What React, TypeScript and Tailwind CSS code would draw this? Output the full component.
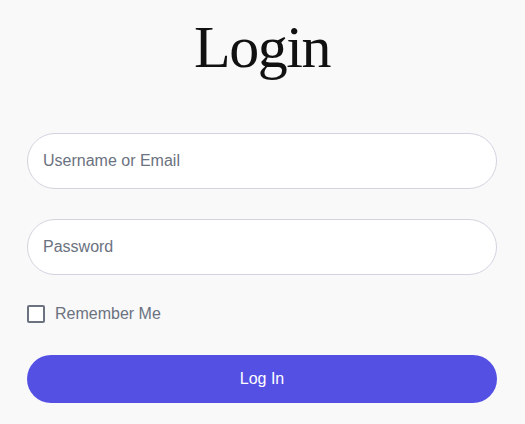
import React from "react";

export default function App() {
  return (
    <div className="min-h-[424px] w-full bg-[#f9f9f9] pl-[27px] pr-[28px] pt-[17px]" style={{ fontFamily: '"Liberation Sans", Arial, sans-serif' }}>
      <h1
        className="text-center text-[60px] leading-[60px] tracking-[-0.025em] text-[#111111]"
        style={{ fontFamily: '"Liberation Serif", "Times New Roman", serif' }}
      >
        Login
      </h1>
      <form className="mt-[56px] flex flex-col" onSubmit={(e) => e.preventDefault()}>
        <input
          type="text"
          placeholder="Username or Email"
          className="h-[56px] w-full rounded-full border border-[#d3d3e0] bg-white px-[15px] text-[16px] text-[#374151] outline-none placeholder:text-[#6b7280]"
        />
        <input
          type="password"
          placeholder="Password"
          className="mt-[30px] h-[56px] w-full rounded-full border border-[#d3d3e0] bg-white px-[15px] text-[16px] text-[#374151] outline-none placeholder:text-[#6b7280]"
        />
        <label className="mt-[30px] flex h-[18px] items-center gap-[10px] text-[16px] text-[#6b7280]">
          <span className="block h-[18px] w-[18px] rounded-[2px] border-2 border-[#6b7280] bg-white" />
          Remember Me
        </label>
        <button
          type="submit"
          className="mt-[32px] h-[48px] w-full rounded-full bg-[#5550e4] text-[16px] text-white"
        >
          Log In
        </button>
      </form>
    </div>
  );
}
